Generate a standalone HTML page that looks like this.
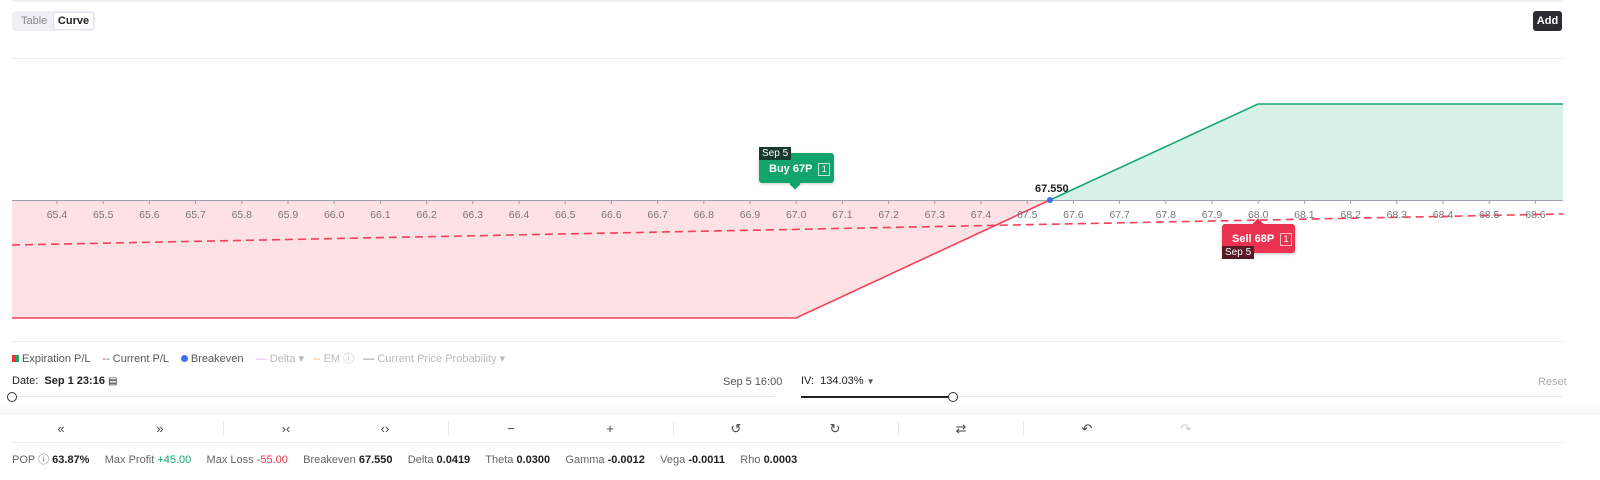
<!DOCTYPE html>
<html style="overflow:hidden;width:1600px;height:480px"><head><meta charset="utf-8"><style>
*{margin:0;padding:0;box-sizing:border-box}
body{width:1600px;height:480px;background:#fff;font-family:"Liberation Sans",sans-serif;position:relative;overflow:hidden;color:#222}
.a{position:absolute}
.t{font-size:11px;color:#555;white-space:nowrap}
</style></head><body>
<div class="a" style="left:12px;top:0;width:1551px;height:2px;background:#eef0f3"></div>
<div class="a" style="left:12px;top:11px;width:83px;height:20px;background:#eef0f4;border-radius:4px"></div>
<div class="a t" style="left:21px;top:15px;color:#888">Table</div>
<div class="a" style="left:53px;top:12px;width:41px;height:18px;background:#fff;border:1px solid #dde3ee;border-radius:3px;font-size:11px;font-weight:bold;text-align:center;line-height:16px">Curve</div>
<div class="a" style="left:1533px;top:11px;width:29px;height:20px;background:#2b2d31;border-radius:3px;color:#fff;font-size:11px;font-weight:bold;text-align:center;line-height:20px">Add</div>

<svg class="a" style="left:0;top:0" width="1600" height="345">
<line x1="12" y1="58.5" x2="1563" y2="58.5" stroke="#eee"/>
<line x1="12" y1="341.5" x2="1563" y2="341.5" stroke="#eee"/>
<polygon points="12,200 1050,200 796,318 12,318" fill="#fde1e4"/>
<polygon points="1050,200 1258,104 1563,104 1563,200" fill="#d8f2e6"/>
<line x1="12" y1="200.5" x2="1563" y2="200.5" stroke="#9aa0ac"/>
<polyline points="12,318 796,318 1050,200" fill="none" stroke="#f0405a" stroke-width="1.6"/>
<polyline points="1050,200 1258,104 1563,104" fill="none" stroke="#16a86c" stroke-width="1.6"/>
<line x1="12" y1="245" x2="1563" y2="214" stroke="#f0405a" stroke-width="1.6" stroke-dasharray="8,5"/>
<circle cx="1050" cy="200" r="3" fill="#3e6ff0"/>
<g id="ticks"></g>
</svg>
<div id="lbl"></div>
<div class="a" style="left:1035px;top:183px;font-size:11px;font-weight:bold">67.550</div>

<div class="a" style="left:759px;top:153px;width:75px;height:30px;background:#12a46a;border-radius:3px;box-shadow:0 1px 3px rgba(0,0,0,.2)"></div>
<div class="a" style="left:791px;top:180px;width:8px;height:8px;background:#12a46a;transform:rotate(45deg)"></div>
<div class="a" style="left:759px;top:147px;height:13px;padding:0 3px;background:#173a2d;color:#fff;font-size:10px;line-height:13px">Sep 5</div>
<div class="a" style="left:769px;top:163px;color:#fff;font-size:11px;font-weight:bold">Buy 67P <span style="display:inline-block;border:1px solid #bfe8d6;width:12px;height:13px;font-size:9px;text-align:center;line-height:11px;font-weight:normal;margin-left:3px">1</span></div>

<div class="a" style="left:1254px;top:220px;width:8px;height:8px;background:#ea3350;transform:rotate(45deg)"></div>
<div class="a" style="left:1222px;top:224px;width:73px;height:29px;background:#ea3350;border-radius:3px;box-shadow:0 1px 3px rgba(0,0,0,.25)"></div>
<div class="a" style="left:1232px;top:233px;color:#fff;font-size:11px;font-weight:bold">Sell 68P <span style="display:inline-block;border:1px solid #f8b5c0;width:12px;height:13px;font-size:9px;text-align:center;line-height:11px;font-weight:normal;margin-left:3px">1</span></div>
<div class="a" style="left:1222px;top:246px;height:13px;padding:0 3px;background:#5a1a25;color:#fff;font-size:10px;line-height:13px">Sep 5</div>

<div class="a t" style="left:12px;top:350px">
<span style="display:inline-block;width:7px;height:7px;background:linear-gradient(90deg,#e33 50%,#1a6 50%)"></span> Expiration P/L &nbsp;&nbsp;
<span style="color:#e33">-</span><span style="color:#1a6">-</span> Current P/L &nbsp;&nbsp;
<span style="display:inline-block;width:7px;height:7px;border-radius:50%;background:#3e6ff0"></span> Breakeven &nbsp;&nbsp;
<span style="color:#bbb"><span style="color:#d9a5e6">—</span> Delta ▾ &nbsp;&nbsp;<span style="color:#f4a070">--</span> EM ⓘ &nbsp;&nbsp;<span style="color:#888">—</span> Current Price Probability ▾</span></div>
<div class="a" style="left:12px;top:375px;font-size:11px">Date: &nbsp;<b>Sep 1 23:16</b> <span style="font-size:10px">▤</span></div>
<div class="a t" style="left:723px;top:376px">Sep 5 16:00</div>
<div class="a" style="left:12px;top:396px;width:762px;height:1px;background:#e6e6e6"></div>
<div class="a" style="left:7px;top:392px;width:10px;height:10px;border:1.5px solid #333;border-radius:50%;background:#fff"></div>
<div class="a" style="left:801px;top:375px;font-size:11px">IV: &nbsp;134.03% <span style="font-size:8px;color:#555">▼</span></div>
<div class="a t" style="left:1538px;top:376px;color:#aaa">Reset</div>
<div class="a" style="left:801px;top:396px;width:762px;height:1px;background:#e6e6e6"></div>
<div class="a" style="left:801px;top:396px;width:152px;height:2px;background:#222"></div>
<div class="a" style="left:948px;top:392px;width:10px;height:10px;border:1.5px solid #333;border-radius:50%;background:#fff"></div>
<div class="a" style="left:0;top:405px;width:1600px;height:10px;background:linear-gradient(#fff,#f6f6f6)"></div>
<div class="a" style="left:12px;top:442px;width:1551px;height:1px;background:#eee"></div>
<div id="icons"></div>
<div class="a" style="left:12px;top:451px;font-size:11px;color:#666;white-space:nowrap">POP ⓘ <b style="color:#222">63.87%</b>&nbsp;&nbsp;&nbsp;&nbsp; Max Profit <span style="color:#17a86a">+45.00</span>&nbsp;&nbsp;&nbsp;&nbsp; Max Loss <span style="color:#e9344f">-55.00</span>&nbsp;&nbsp;&nbsp;&nbsp; Breakeven <b style="color:#222">67.550</b>&nbsp;&nbsp;&nbsp;&nbsp; Delta <b style="color:#222">0.0419</b>&nbsp;&nbsp;&nbsp;&nbsp; Theta <b style="color:#222">0.0300</b>&nbsp;&nbsp;&nbsp;&nbsp; Gamma <b style="color:#222">-0.0012</b>&nbsp;&nbsp;&nbsp;&nbsp; Vega <b style="color:#222">-0.0011</b>&nbsp;&nbsp;&nbsp;&nbsp; Rho <b style="color:#222">0.0003</b></div>
<script>
var s='',g='';
for(var i=0;i<=32;i++){var v=654+i,x=57+i*46.2,lab=Math.floor(v/10)+'.'+(v%10);
g+='<line x1="'+x+'" y1="200" x2="'+x+'" y2="204" stroke="#9aa0ac"/>';
s+='<div class="a t" style="left:'+(x-12)+'px;top:209px;width:24px;text-align:center;color:#777;font-size:10.5px">'+lab+'</div>';}
document.getElementById('ticks').innerHTML=g;
document.getElementById('lbl').innerHTML=s;
var ic=[[61,'«'],[160,'»'],[286,'›‹'],[385,'‹›'],[511,'−'],[610,'+'],[736,'↺'],[835,'↻'],[961,'⇄'],[1087,'↶'],[1186,'↷']];
var h='';ic.forEach(function(c,k){h+='<div class="a" style="left:'+(c[0]-10)+'px;top:421px;width:20px;text-align:center;font-size:13px;color:'+(k==10?'#ccc':'#444')+'">'+c[1]+'</div>';});
[223,448,673,898,1023].forEach(function(x){h+='<div class="a" style="left:'+x+'px;top:422px;width:1px;height:14px;background:#e6e6e6"></div>';});
document.getElementById('icons').innerHTML=h;
</script>
</body></html>
